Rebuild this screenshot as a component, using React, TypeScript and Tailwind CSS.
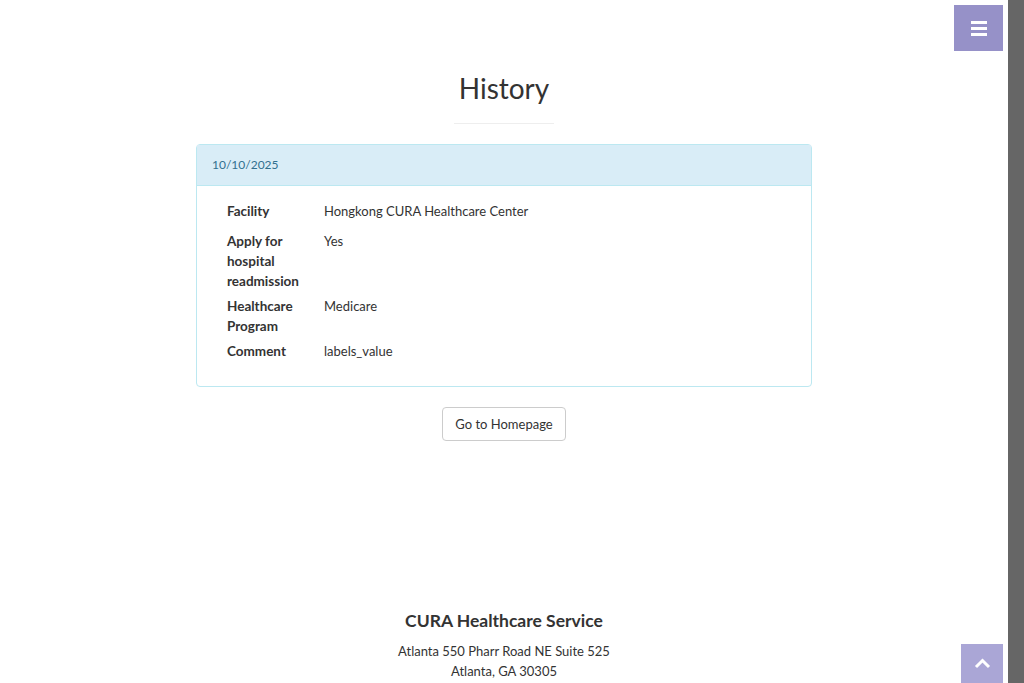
import React from 'react';

const rows: { label: string; value: string; mt: string }[] = [
    { label: 'Facility', value: 'Hongkong CURA Healthcare Center', mt: 'mt-0' },
    { label: 'Apply for hospital readmission', value: 'Yes', mt: 'mt-[10px]' },
    { label: 'Healthcare Program', value: 'Medicare', mt: 'mt-[5px]' },
    { label: 'Comment', value: 'labels_value', mt: 'mt-[5px]' },
];

export default function App() {
    return (
        <div className="flex h-[683px] w-[1024px] overflow-hidden bg-white font-['Lato',sans-serif] text-[13px] leading-5 text-[#333]">
            {/* Main content */}
            <main className="relative flex w-[1008px] flex-col items-center">
                {/* Menu toggle */}
                <button className="absolute right-[5px] top-[5px] flex h-[46px] w-[49px] items-center justify-center bg-[#9691c8]">
                    <div className="flex w-[16px] flex-col gap-[3px]">
                        <span className="h-[3px] w-full bg-white"></span>
                        <span className="h-[3px] w-full bg-white"></span>
                        <span className="h-[3px] w-full bg-white"></span>
                    </div>
                </button>

                <h2 className="mt-[70px] text-[28px] leading-[36px] text-[#333]">History</h2>
                <hr className="mt-[17px] w-[100px] border-t border-[#eee]" />

                {/* Panel */}
                <div className="mt-5 w-[616px] rounded border border-[#bce8f1]">
                    <div className="flex h-[41px] items-center border-b border-[#bce8f1] bg-[#d9edf7] px-[15px] text-[12px] text-[#31708f]">
                        10/10/2025
                    </div>
                    <div className="px-[30px] pb-[25px] pt-[15px]">
                        {rows.map((r) => (
                            <div key={r.label} className={`flex ${r.mt}`}>
                                <div className="w-[97px] pr-[6px] text-[13.5px] font-bold">{r.label}</div>
                                <div>{r.value}</div>
                            </div>
                        ))}
                    </div>
                </div>

                <button className="mt-5 h-[34px] rounded border border-[#ccc] bg-white px-3 text-[13px] text-[#333]">
                    Go to Homepage
                </button>

                {/* Footer */}
                <footer className="mt-[169px] flex flex-col items-center">
                    <h4 className="text-[17.5px] font-bold leading-[22px]">CURA Healthcare Service</h4>
                    <p className="mt-[9px] text-[13px]">Atlanta 550 Pharr Road NE Suite 525</p>
                    <p className="text-[13px]">Atlanta, GA 30305</p>
                </footer>

                {/* Scroll to top */}
                <button className="absolute bottom-0 right-[5px] flex h-[39px] w-[42px] items-start justify-center bg-[#aaa6d6] pt-[14px]">
                    <svg width="17" height="11" viewBox="0 0 17 11">
                        <path d="M2 9 L8.5 2.5 L15 9" fill="none" stroke="white" strokeWidth="3" />
                    </svg>
                </button>
            </main>

            {/* Sidebar edge */}
            <div className="w-4 bg-[#666]"></div>
        </div>
    );
}
